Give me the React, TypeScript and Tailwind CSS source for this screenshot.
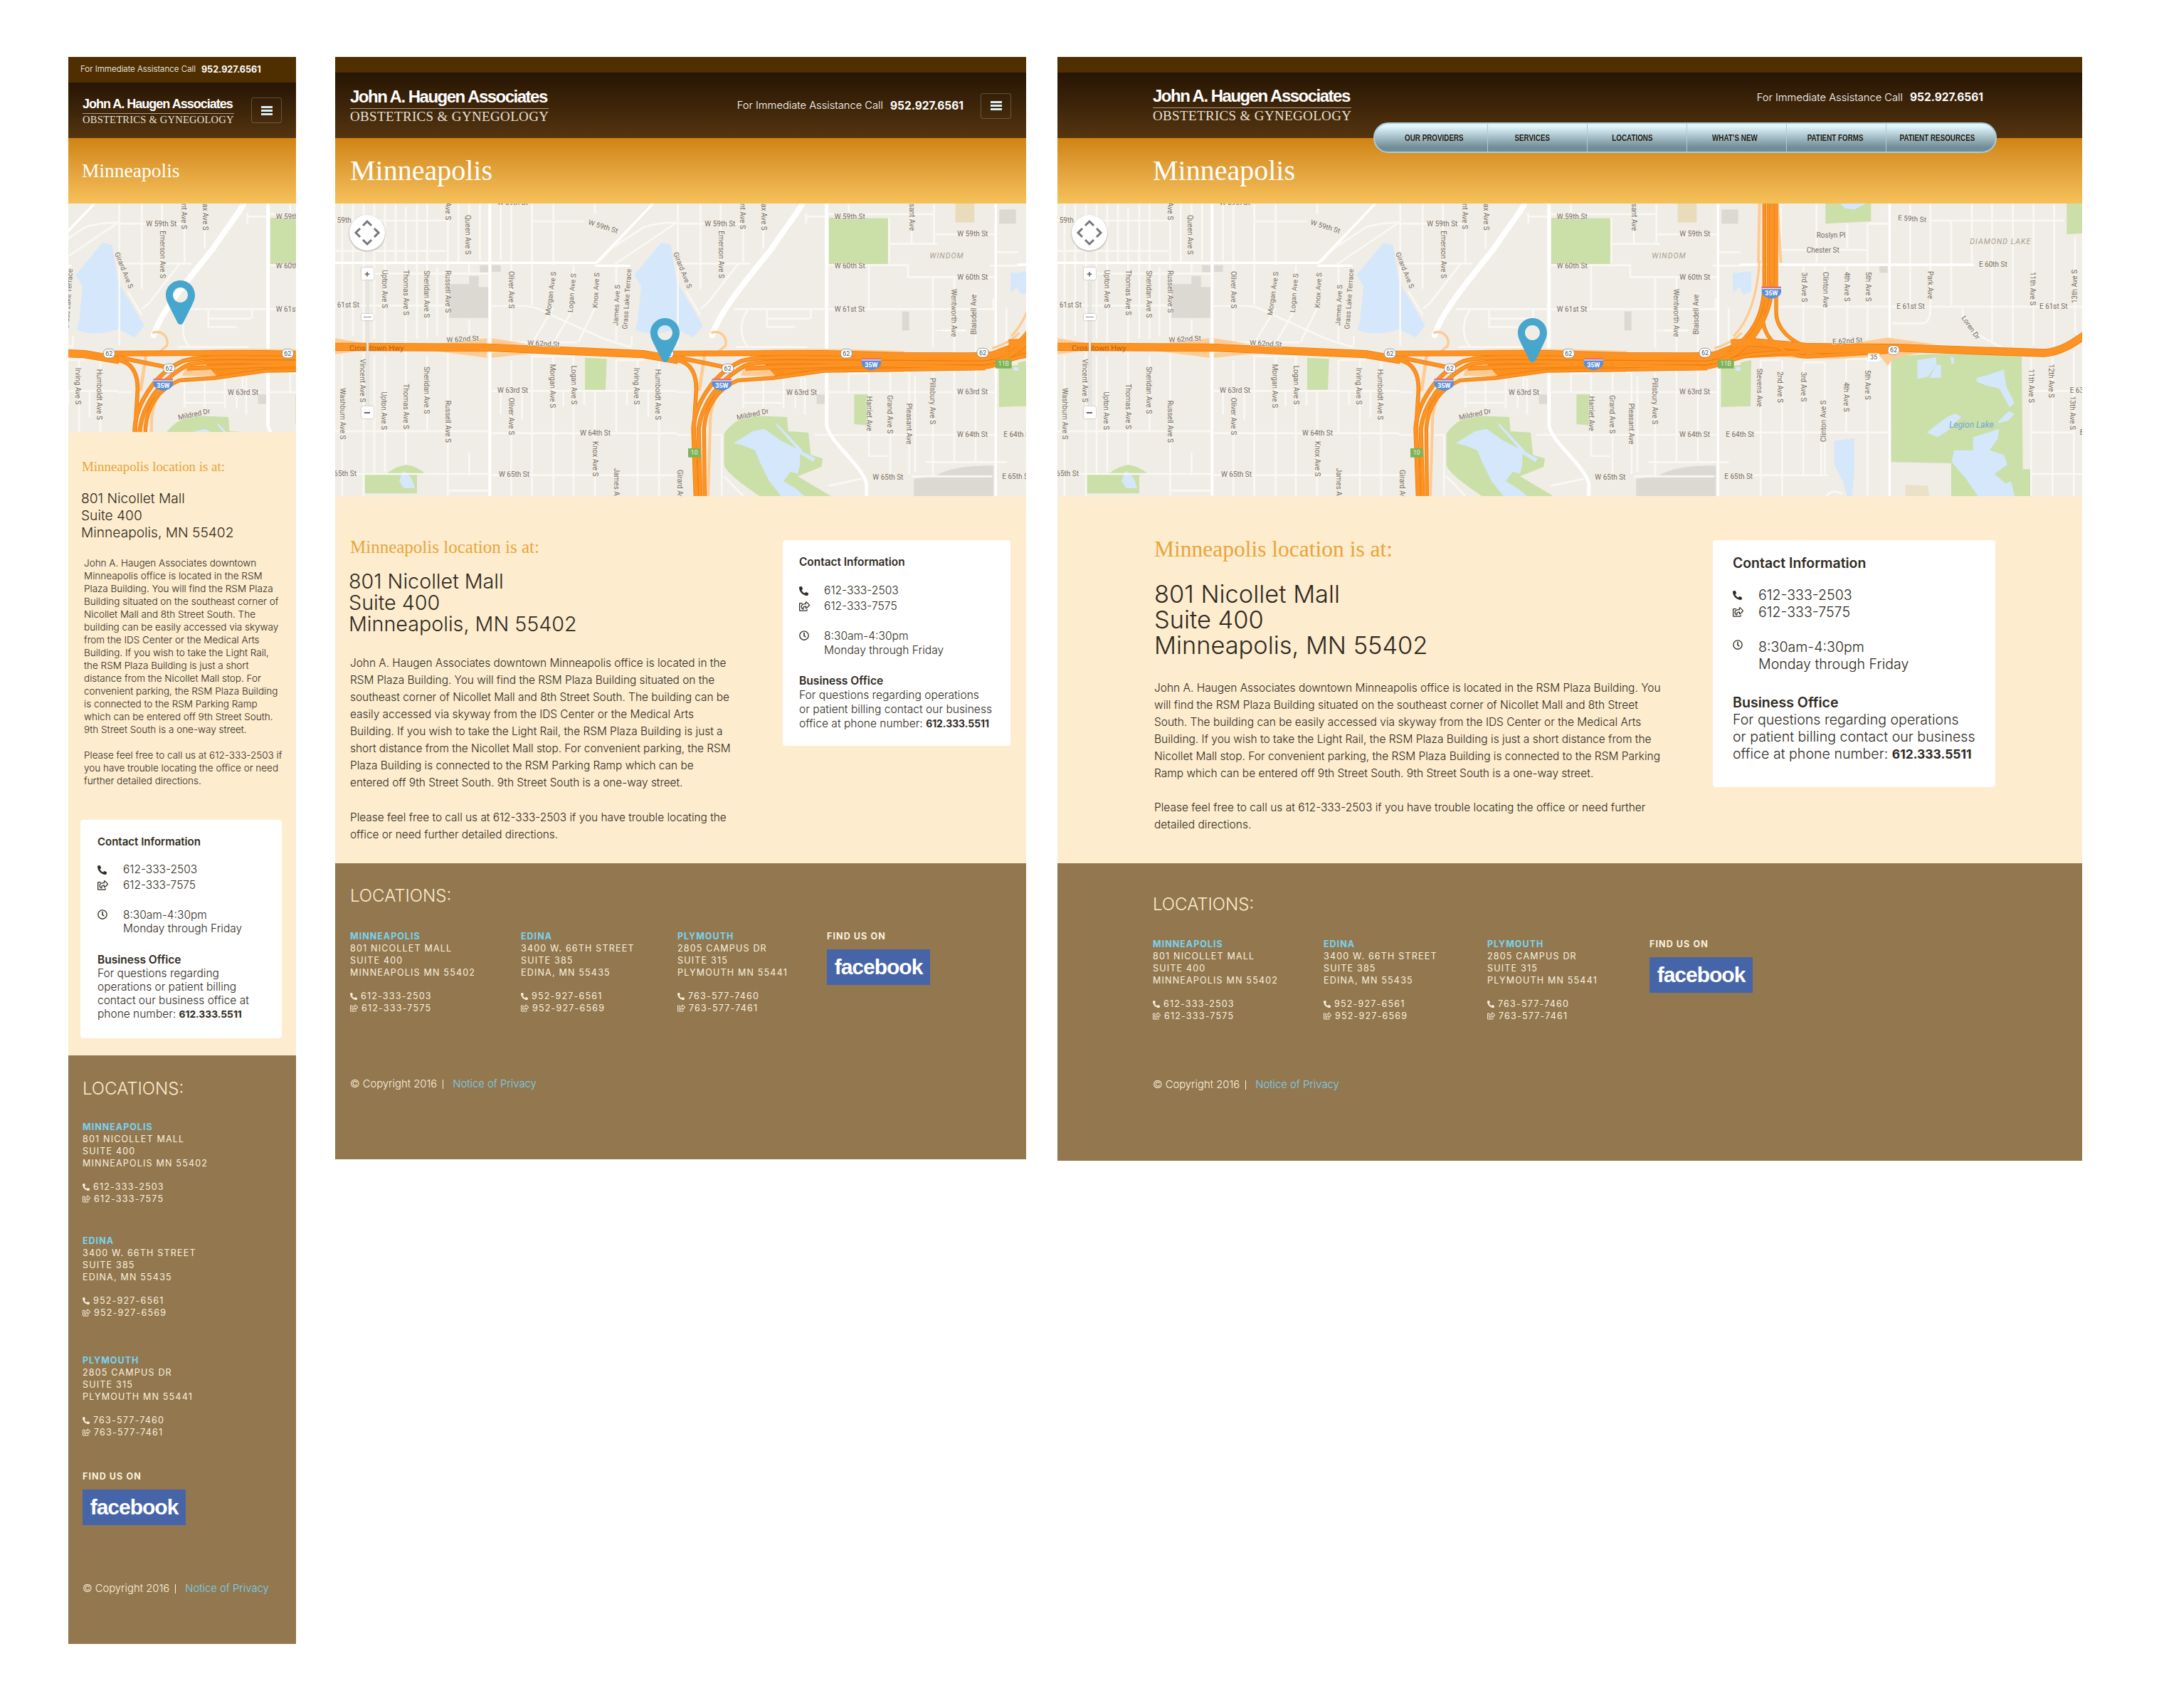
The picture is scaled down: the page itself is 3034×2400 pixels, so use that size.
import { FaPhoneAlt, FaRegClock, FaRegShareSquare } from "react-icons/fa";

// All map coordinates are in "panel" units: 3x the page pixels, one panel per 480px of map
const STREETS: string[][] = [
  [
    "M0 72H470M830 75H1050M0 200H470M165 295H650M0 430H480M660 432H800Q850 435 900 465L1100 555Q1150 580 1250 605",
    "M0 960H650M660 968H1440M660 790H1440M0 1140H650M660 1145H1440M660 585H1020M830 645H1010M1185 660H1300M30 0V570M30 640V1233",
    "M75 0V560M120 0V1233M165 0V570M210 0V600M210 640V1130M255 0V250M298 15V1100M345 0V570M388 0V570M388 640V960M430 270V560M475 0V1233",
    "M520 0V250M565 0V80M565 300V250M565 490V560M610 0V240M698 0V240M698 790V890M742 0V580M742 660V1233M830 0V430M830 640V1233M920 0V260M920 640V1233",
    "M1005 260V420M1005 640V1233M1095 0V45M1095 790V1233M1185 262V580M1185 660V960M1275 660V1233M1365 660V1233M920 440L835 580M1005 440L925 580M1095 440L1025 585",
    "M1320 790V900M1230 790V850M1050 790V850M962 790V855M788 790V910M1250 560V600M480 1210H650M565 1050V1145M165 640V1140",
    "M1340 0L1110 250M1150 200L1300 100Q1360 80 1440 80M1180 255L1440 80M1240 262H1100",
  ],
  [
    "M0 85H275M0 253H310M545 55H640M640 45H1080M1090 130H1340M900 170H1100M1350 205H1440M640 260H975V310H1340M1320 262H1440M240 445H1340",
    "M380 485H560M380 450V520H500M250 605H550M1120 535H1220M720 715H810M900 710H975M0 795H60M280 795H600M640 795H1340M280 840H445M0 975H60M140 975H190M580 975H1340",
    "M810 1065H890M1050 1090H1390M990 1150H1330M5 0V600M100 0V360M185 0V250M280 100V250M365 90V190M545 40V85M725 0V50M990 0V170M1085 0V165M895 60V250M810 260V450M1080 315V610",
    "M1170 310V1090M1260 375V1090M1335 400V450M1390 440V600M725 715V800M810 715V1065M900 710V1140M980 710V1140M1080 710V1145M1005 730V1130M365 750V860M280 750V860M450 720V865M540 735V890M500 800V865M190 975V1230",
    "M40 370L100 470M260 253L130 420L100 445M300 450C270 480 260 560 300 605M525 735V800M565 445V485M640 1190L780 1160M200 1150L280 1233",
  ],
  [
    "M800 72H1365M535 85H630V80M165 435H1440M170 195H530M640 505H770Q800 500 800 440M170 0V250M320 0V250M265 260V580M355 260V585M450 85V190M450 260V570M535 85V250M535 260V570",
    "M715 0V430M800 0V470M888 70V430M975 0V250M1060 0V590M1148 0V600M1235 0V600M1322 0V600M1410 140V530Q1410 560 1440 555M85 660H165M175 660V1233M85 660V1233M265 670V1150M265 670H355V1140M445 655H620M445 655V965M535 650V1233",
    "M1225 650V1233M1315 650V1233M1405 620V1233M1230 790H1440M0 965H625M1230 965H1400M0 1145H370M1225 1140H1440M340 1000V1140M935 440L940 490Q960 540 1100 605M360 1233Q390 1200 430 1225",
  ],
];

const WHITE_ROADS: { d: string; w: number }[][] = [
  [
    { d: "M652 0V1233", w: 12 },
    { d: "M0 250H1100M1100 262H1240", w: 10 },
    { d: "M1100 250L1340 0", w: 9 },
  ],
  [
    { d: "M150 555C180 450 330 280 400 190C460 100 510 40 530 0", w: 24 },
    { d: "M632 0V930C635 1000 780 1100 800 1180V1233", w: 15 },
    { d: "M1345 0V1233", w: 10 },
    { d: "M1090 535H1220", w: 3 },
  ],
  [
    { d: "M0 258H980", w: 10 },
    { d: "M628 0V1233", w: 10 },
  ],
];

const WATER: string[][] = [
  [
    "M1262 300L1290 350L1275 500L1265 530Q1330 565 1440 530L1510 565L1550 515L1500 430L1470 380L1440 330L1415 175L1375 165Z",
    "M285 1128Q305 1130 325 1165L336 1200L290 1200L270 1170Z",
  ],
  [
    "M240 1010L320 960L370 950L440 1000L520 1040L585 1075L575 1090L520 1055L520 1100L510 1140L480 1130L450 1170L500 1200L540 1233L440 1233L390 1170L350 1090L330 1040L280 1020Z",
    "M420 925L530 1040L520 1050L420 935Z",
    "M1408 292H1440V350L1408 375Z",
    "M1420 690H1440V705H1420Z",
  ],
  [
    "M420 0H530L480 25L440 20Z",
    "M0 290L45 285V370L15 385L0 365Z",
    "M395 1000L480 990V1130L470 1233H450L430 1170L395 1100Z",
    "M745 660L825 648V680L790 730L745 740Z",
    "M795 735L825 680H845V735Z",
    "M885 645L900 650V675H888Z",
    "M995 735L1050 720L1110 700L1120 770L1155 840L1135 860L1090 780L1030 765L995 750Z",
    "M1085 920L1130 875L1155 885L1130 915L1090 925Z",
    "M785 965L830 930L870 900L905 885L930 900L870 960L830 985Z",
    "M980 985L1090 950L1085 990L1050 1040L1110 1060L1125 1100L1070 1140L1130 1190L1150 1233H1000L950 1160L890 1090L900 1040L980 1040Z",
    "M1000 1233L1140 1170L1155 1233Z",
  ],
];

const PARKS: string[][] = [
  [
    "M1053 650L1145 655L1140 785H1053Z",
    "M125 1140H215Q260 1105 300 1102Q340 1105 385 1142L345 1145V1222H125Z",
  ],
  [
    "M642 60L898 62L890 255H642Z",
    "M748 805H808V935L748 930Z",
    "M1358 690L1440 680V855L1358 858Z",
    "M200 970C240 910 300 895 330 895L465 900L470 960L555 965L565 1060L615 1075L610 1110L510 1150L650 1233H350C300 1200 200 1130 200 1100Z",
  ],
  [
    "M358 0H550V75L358 85Z",
    "M1375 0H1440V125L1375 130Z",
    "M0 670L45 660L42 855H0Z",
    "M635 650Q800 620 1185 645L1190 1120H1225V1233H888V1095L635 1090Z",
  ],
];

const GRAY_BLOCKS: string[][] = [
  ["M480 340H565V305H605V352H645V482H480Z", "M610 260H645V290H610Z", "M660 260H698V288H660Z"],
  ["M1360 25H1430V85H1360Z", "M950 455H980V535H950Z", "M590 805H625V845H590Z", "M1000 1160L1090 1150C1150 1110 1250 1105 1335 1105V1233H1000Z"],
  ["M585 262H620V292H585Z"],
];

const LIGHT_RAMPS: { d: string; w?: number }[][] = [
  [
    { d: "M0 568L130 590H0Z", w: 0 },
    { d: "M0 635L130 618L0 618Z", w: 0 },
    { d: "M430 592L640 568V592Z", w: 0 },
    { d: "M660 568L810 592H660Z", w: 0 },
    { d: "M660 650L850 630H660Z", w: 0 },
    { d: "M410 620L640 650V620Z", w: 0 },
  ],
  [
    { d: "M320 620Q500 605 960 622L960 710H620Q500 735 270 725Z", w: 0 },
    { d: "M120 620L95 790", w: 14 },
    { d: "M145 545C190 530 215 570 205 600L175 625", w: 10 },
    { d: "M132 1233L142 900C150 840 170 800 190 780", w: 12 },
    { d: "M1330 610Q1400 590 1445 545", w: 10 },
  ],
  [
    { d: "M80 0L75 250M155 0L170 250", w: 12 },
    { d: "M80 240C70 400 30 500 -30 560", w: 10 },
    { d: "M440 595L620 565L830 595H440Z", w: 0 },
    { d: "M150 640C200 660 450 660 620 640V625H150Z", w: 0 },
    { d: "M585 640L620 685L640 655L760 628H600Z", w: 0 },
  ],
];

// Solid orange under the lanes where carriageways run side by side
const HIGHWAY_BASE: string[][] = [
  [],
  ["M500 625L1290 630L1300 702L620 708L420 732L360 665Z"],
  ["M-40 600L280 600V640L-40 655Z"],
];

// Orange carriageways, drawn as a dark casing and a lighter fill on top
const HIGHWAYS: { d: string; w: number }[][] = [
  [
    { d: "M0 604L650 607L1300 635L1445 660", w: 30 },
  ],
  [
    { d: "M-15 632L620 630L960 640H1240L1330 635Q1400 610 1445 590", w: 20 },
    { d: "M0 648L215 692", w: 14 },
    { d: "M0 660C55 670 85 710 82 790L72 950L85 1233", w: 13 },
    { d: "M80 1233L70 950C75 850 150 720 270 665C320 648 400 648 620 650L1290 655C1360 650 1400 625 1445 600", w: 14 },
    { d: "M100 1233L92 950C105 850 170 750 285 685C330 665 420 665 620 668L1290 672C1360 668 1400 640 1445 612", w: 14 },
    { d: "M290 695C400 690 500 685 800 680L1290 690C1360 685 1400 655 1445 628", w: 14 },
    { d: "M118 1233L115 950C120 860 170 780 260 745L410 735L620 705L1300 695", w: 12 },
  ],
  [
    { d: "M100 0V330C100 480 40 560 -40 618", w: 12 },
    { d: "M118 0V330C118 470 50 580 -40 632", w: 12 },
    { d: "M135 0V330C130 470 60 590 -40 645", w: 12 },
    { d: "M150 0V460C150 530 220 590 290 605", w: 12 },
    { d: "M-40 590L60 585L280 605L650 608L1280 630C1350 625 1400 590 1450 555", w: 30 },
    { d: "M-40 660C40 630 100 625 640 620", w: 14 },
    { d: "M95 500C105 570 170 640 280 645L620 625", w: 12 },
  ],
];

type Label = [number, number, number, string];

const LABELS: Label[][] = [
  [
    [8, 80, 0, "59th"], [8, 437, 0, "61st St"], [1065, 88, 17, "W 59th St"], [470, 585, -3, "W 62nd St"], [810, 597, 3, "W 62nd St"],
    [684, 797, 0, "W 63rd St"], [1032, 978, 0, "W 64th St"], [690, 1152, 0, "W 65th St"], [-5, 1148, 0, "65th St"], [683, 5, 0, "W 59th St"],
    [465, -5, 90, "Ave S"], [550, 48, 90, "Queen Ave S"], [197, 280, 90, "Upton Ave S"], [287, 280, 90, "Thomas Ave S"], [375, 282, 90, "Sheridan Ave S"],
    [465, 282, 90, "Russell Ave S"], [733, 285, 90, "Oliver Ave S"], [906, 472, -82, "Morgan Ave S"], [1001, 460, -85, "Logan Ave S"], [1106, 440, -87, "Knox Ave S"],
    [1192, 515, -87, "James Ave S"], [1231, 530, -86, "Grass Lake Terrace"], [106, 655, 90, "Vincent Ave S"], [20, 778, 90, "Washburn Ave S"], [196, 793, 90, "Upton Ave S"],
    [287, 760, 90, "Thomas Ave S"], [375, 687, 90, "Sheridan Ave S"], [465, 830, 90, "Russell Ave S"], [733, 818, 90, "Oliver Ave S"], [905, 677, 90, "Morgan Ave S"],
    [995, 683, 90, "Logan Ave S"], [1261, 692, 90, "Irving Ave S"], [1350, 698, 90, "Humboldt Ave S"], [1087, 1002, 90, "Knox Ave S"], [1175, 1115, 90, "James A"],
    [1425, 210, 68, "Girard Ave S"],
  ],
  [
    [118, 95, 0, "W 59th St"], [268, 0, 90, "nt Ave S"], [357, 0, 90, "ax Ave S"], [178, 115, 90, "Emerson Ave S"], [665, 65, 0, "W 59th St"], [980, 0, 90, "sant Ave"],
    [1183, 138, 0, "W 59th St"], [665, 272, 0, "W 60th St"], [1183, 322, 0, "W 60th St"], [665, 457, 0, "W 61st St"], [1158, 360, 90, "Wentworth Ave"], [1262, 552, -90, "Blaisdell Ave"],
    [462, 808, 0, "W 63rd St"], [1182, 805, 0, "W 63rd St"], [800, 812, 90, "Harriet Ave"], [888, 808, 90, "Grand Ave S"], [968, 842, 90, "Pleasant Ave"], [1068, 735, 90, "Pillsbury Ave S"],
    [1182, 983, 0, "W 64th St"], [1378, 983, 0, "E 64th St"], [826, 1163, 0, "W 65th St"], [1372, 1160, 0, "E 65th St"], [255, 912, -12, "Mildred Dr"], [2, 1122, 90, "Girard Ave S"],
  ],
  [
    [663, 70, 4, "E 59th St"], [320, 145, 0, "Roslyn Pl"], [278, 207, 0, "Chester St"], [1005, 266, 0, "E 60th St"], [257, 290, 90, "3rd Ave S"], [347, 288, 90, "Clinton Ave"],
    [438, 288, 90, "4th Ave S"], [527, 288, 90, "5th Ave S"], [790, 285, 90, "Park Ave"], [658, 443, 0, "E 61st St"], [1222, 288, 90, "11th Ave S"], [1260, 443, 0, "E 61st St"],
    [1420, 420, -90, "13th Ave S"], [930, 482, 55, "Loren Dr"], [388, 592, -3, "E 62nd St"], [70, 695, 90, "Stevens Ave"], [155, 708, 90, "2nd Ave S"], [254, 710, 90, "3rd Ave S"],
    [360, 1005, -90, "Clinton Ave S"], [435, 753, 90, "4th Ave S"], [525, 702, 90, "5th Ave S"], [1215, 698, 90, "11th Ave S"],
    [1300, 677, 90, "12th Ave S"], [1388, 798, 0, "E 63rd St"], [1390, 812, 90, "13th Ave S"], [1430, 975, 0, "E 64th"],
  ],
];

function RoadLabel({ x, y, rot, text }: { x: number; y: number; rot: number; text: string }) {
  return (
    <text
      x={x}
      y={y}
      transform={rot ? `rotate(${rot} ${x} ${y})` : undefined}
      fontSize={30}
      fill="#786d5f"
      stroke="#f3f1ea"
      strokeWidth={4}
      className="[font-family:Roboto,sans-serif] [paint-order:stroke]"
    >
      {text}
    </text>
  );
}

function RouteShield({ x, y }: { x: number; y: number }) {
  return (
    <g>
      <rect x={x - 24} y={y - 19} width={48} height={38} rx={17} fill="#fff" stroke="#8b8b85" strokeWidth={2.5} />
      <text x={x} y={y + 10} textAnchor="middle" fontSize={27} fill="#555" className="[font-family:Roboto,sans-serif]">62</text>
    </g>
  );
}

function InterstateShield({ x, y }: { x: number; y: number }) {
  return (
    <g>
      <path d={`M${x - 41} ${y - 24}H${x + 41}V${y - 2}Q${x + 38} ${y + 18} ${x} ${y + 26}Q${x - 38} ${y + 18} ${x - 41} ${y - 2}Z`} fill="#5c8fd6" />
      <path d={`M${x - 41} ${y - 26}H${x + 41}V${y - 17}H${x - 41}Z`} fill="#e0707a" />
      <path d={`M${x - 41} ${y - 17}H${x + 41}`} stroke="#fff" strokeWidth={3} />
      <text x={x} y={y + 12} textAnchor="middle" fontSize={27} fontWeight={700} fill="#fff" className="[font-family:Roboto,sans-serif]">35W</text>
    </g>
  );
}

function ExitTag({ x, y, w, h, text, fill, color }: { x: number; y: number; w: number; h: number; text: string; fill: string; color: string }) {
  return (
    <g>
      <rect x={x} y={y} width={w} height={h} fill={fill} />
      <text x={x + w / 2} y={y + h / 2 + 9} textAnchor="middle" fontSize={26} fill={color} className="[font-family:Roboto,sans-serif]">{text}</text>
    </g>
  );
}

function MapWorld() {
  return (
    <>
      <rect width={1440} height={411} fill="#f0ede6" />
      {[0, 1, 2].map((i) => (
        <g key={i} transform={`translate(${i * 480} 0) scale(0.33333)`}>
          {PARKS[i].map((d) => <path key={d} d={d} fill="#cbdfa9" />)}
          {WATER[i].map((d) => <path key={d} d={d} fill="#d5e7fb" />)}
          {GRAY_BLOCKS[i].map((d) => <path key={d} d={d} fill="#dcd9d3" />)}
          {i === 1 && <path d="M1175 0H1255V80H1175Z" fill="#e9dcbb" />}
          {i === 2 && <path d="M695 1185L790 1190L795 1233H695Z" fill="#ebe0c8" />}
          {STREETS[i].map((d) => <path key={d} d={d} fill="none" stroke="#f9f8f4" strokeWidth={8} />)}
          {WHITE_ROADS[i].map((r) => <path key={r.d} d={r.d} fill="none" stroke="#fff" strokeWidth={r.w} strokeLinecap="round" />)}
        </g>
      ))}
      {[0, 1, 2].map((i) => (
        <g key={i} transform={`translate(${i * 480} 0) scale(0.33333)`}>
          {LIGHT_RAMPS[i].map((r) => (
            <path key={r.d} d={r.d} fill={r.w ? "none" : "#fdcb93"} stroke={r.w ? "#fdcb93" : "none"} strokeWidth={r.w} />
          ))}
          {HIGHWAY_BASE[i].map((d) => <path key={d} d={d} fill="#fb8f1f" />)}
          {HIGHWAYS[i].map((h) => <path key={h.d} d={h.d} fill="none" stroke="#ec7806" strokeWidth={h.w + 4} />)}
          {HIGHWAYS[i].map((h) => <path key={h.d} d={h.d} fill="none" stroke="#fc9322" strokeWidth={h.w} />)}
        </g>
      ))}
      {[0, 1, 2].map((i) => (
        <g key={i} transform={`translate(${i * 480} 0) scale(0.33333)`}>
          {LABELS[i].map(([x, y, rot, text]) => <RoadLabel key={`${text}${x}${y}`} x={x} y={y} rot={rot} text={text} />)}
        </g>
      ))}
      <g transform="scale(0.33333)">
        <text x={60} y={622} fontSize={33} fill="#b8600f" className="[font-family:Roboto,sans-serif]">Crosstown Hwy</text>
        <RouteShield x={1402} y={632} />
      </g>
      <g transform="translate(480 0) scale(0.33333)">
        <text x={1066} y={230} fontSize={32} fontStyle="italic" letterSpacing={3} fill="#a89e8e" className="[font-family:Roboto,sans-serif]">WINDOM</text>
        <RouteShield x={715} y={632} />
        <RouteShield x={215} y={695} />
        <RouteShield x={1290} y={629} />
        <InterstateShield x={820} y={677} />
        <InterstateShield x={190} y={764} />
        <ExitTag x={48} y={1032} w={52} h={38} text="10" fill="#7cb35b" color="#e8f5dc" />
        <ExitTag x={1344} y={658} w={68} h={37} text="11B" fill="#7cb35b" color="#e8f5dc" />
      </g>
      <g transform="translate(960 0) scale(0.33333)">
        <text x={967} y={172} fontSize={32} fontStyle="italic" letterSpacing={3} fill="#a89e8e" className="[font-family:Roboto,sans-serif]">DIAMOND LAKE</text>
        <text x={880} y={945} fontSize={36} fontStyle="italic" fill="#74a5d6" className="[font-family:Roboto,sans-serif]">Legion Lake</text>
        <InterstateShield x={130} y={376} />
        <RouteShield x={645} y={618} />
        <ExitTag x={537} y={632} w={48} h={33} text="35" fill="#fff" color="#555" />
      </g>
    </>
  );
}

function MapPin({ className }: { className: string }) {
  return (
    <svg width="41" height="62" viewBox="0 0 41 62" className={`absolute ${className}`}>
      <path
        fillRule="evenodd"
        fill="#46a6cd"
        d="M20.5 0C9.2 0 0 9.2 0 20.5C0 27 2.5 31 5.5 37.5L16.5 59.5C18.2 62.8 22.8 62.8 24.5 59.5L35.5 37.5C38.5 31 41 27 41 20.5C41 9.2 31.8 0 20.5 0ZM20.5 10C26.3 10 31 14.7 31 20.5C31 26.3 26.3 31 20.5 31C14.7 31 10 26.3 10 20.5C10 14.7 14.7 10 20.5 10Z"
      />
    </svg>
  );
}

function MapControls() {
  return (
    <div className="absolute left-[20px] top-[15px] flex w-[50px] flex-col items-center">
      <svg width="52" height="52" viewBox="0 0 52 52" className="drop-shadow-[0_1px_1px_rgba(0,0,0,0.35)]">
        <circle cx="26" cy="26" r="25" fill="#fff" />
        <path d="M20 16L26 10L32 16M20 36L26 42L32 36M16 20L10 26L16 32M36 20L42 26L36 32" fill="none" stroke="#777" strokeWidth="3" />
      </svg>
      <div className="mt-[23px] flex w-[17px] flex-col items-center">
        <div className="flex h-[17px] w-[17px] items-center justify-center rounded-[2px] bg-white text-[13px] font-bold leading-none text-[#666] shadow-[0_0_2px_rgba(0,0,0,0.4)]">+</div>
        <div className="relative h-[178px] w-[3px] bg-[#e8e6e0] shadow-[0_0_1px_rgba(0,0,0,0.5)]">
          <div className="absolute left-[-7px] top-[48px] flex h-[9px] w-[17px] items-center justify-center rounded-[1px] bg-white shadow-[0_0_2px_rgba(0,0,0,0.4)]">
            <div className="h-[1px] w-[11px] bg-[#888]" />
          </div>
        </div>
        <div className="flex h-[17px] w-[17px] items-center justify-center rounded-[2px] bg-white shadow-[0_0_2px_rgba(0,0,0,0.4)]">
          <div className="h-[2px] w-[8px] bg-[#666]" />
        </div>
      </div>
    </div>
  );
}

function LocationMap({ x, w, h, pin, controls }: { x: number; w: number; h: number; pin: string; controls?: boolean }) {
  return (
    <div className="relative overflow-hidden" style={{ width: w, height: h }}>
      <svg width={w} height={h} viewBox={`${x} 0 ${w} ${h}`} className="block">
        <MapWorld />
      </svg>
      <MapPin className={pin} />
      {controls && <MapControls />}
    </div>
  );
}

function Logo({ title, sub }: { title: string; sub: string }) {
  return (
    <div className="inline-flex flex-col">
      <div className={`whitespace-nowrap border-b border-[#a99c8a] pb-[1px] font-bold text-white [font-family:'Liberation_Sans',sans-serif] ${title}`}>
        John A. Haugen Associates
      </div>
      <div className={`whitespace-nowrap text-[#e8e1d6] [font-family:'Liberation_Serif',serif] ${sub}`}>
        OBSTETRICS &amp; GYNEGOLOGY
      </div>
    </div>
  );
}

function MenuToggle() {
  return (
    <div className="flex h-[36px] w-[43px] flex-col items-center justify-center gap-[2px] rounded-[3px] border border-[#ffffff38]">
      <div className="h-[3px] w-[16px] bg-[#d6eef5]" />
      <div className="h-[3px] w-[16px] bg-[#d6eef5]" />
      <div className="h-[3px] w-[16px] bg-[#d6eef5]" />
    </div>
  );
}

function Lines({ lines, className }: { lines: string[]; className: string }) {
  return (
    <div className={className}>
      {lines.map((line) => <div key={line} className="whitespace-nowrap">{line}</div>)}
    </div>
  );
}

function ContactCard({ width, text, titleText, pad, indent, gaps, billing }: {
  width: string; text: string; titleText: string; pad: string; indent: string;
  gaps: [string, string, string]; billing: string[];
}) {
  return (
    <div className={`rounded-[4px] bg-white font-light text-[#2f2a22] ${width} ${pad} ${text}`}>
      <div className={`font-semibold whitespace-nowrap ${titleText}`}>Contact Information</div>
      <div className={gaps[0]}>
        <div className="flex items-center">
          <div className={indent}><FaPhoneAlt className="h-[13px] w-[13px] text-[#2f2a22]" /></div>
          <span>612-333-2503</span>
        </div>
        <div className="flex items-center">
          <div className={indent}><FaRegShareSquare className="h-[14px] w-[15px] text-[#2f2a22]" /></div>
          <span>612-333-7575</span>
        </div>
      </div>
      <div className={`flex items-start ${gaps[1]}`}>
        <div className={`${indent} pt-[2px]`}><FaRegClock className="h-[14px] w-[14px] text-[#2f2a22]" /></div>
        <div>
          <div>8:30am-4:30pm</div>
          <div>Monday through Friday</div>
        </div>
      </div>
      <div className={gaps[2]}>
        <div className="font-semibold">Business Office</div>
        {billing.slice(0, -1).map((line) => <div key={line} className="whitespace-nowrap">{line}</div>)}
        <div className="whitespace-nowrap">
          {billing[billing.length - 1]} <b className="text-[0.89em] font-bold">612.333.5511</b>
        </div>
      </div>
    </div>
  );
}

const OFFICES = [
  { name: "MINNEAPOLIS", lines: ["801 NICOLLET MALL", "SUITE 400", "MINNEAPOLIS MN 55402"], phone: "612-333-2503", fax: "612-333-7575" },
  { name: "EDINA", lines: ["3400 W. 66TH STREET", "SUITE 385", "EDINA, MN 55435"], phone: "952-927-6561", fax: "952-927-6569" },
  { name: "PLYMOUTH", lines: ["2805 CAMPUS DR", "SUITE 315", "PLYMOUTH MN 55441"], phone: "763-577-7460", fax: "763-577-7461" },
];

function Office({ office, className }: { office: (typeof OFFICES)[number]; className: string }) {
  return (
    <div className={`text-[12.5px] font-normal leading-[17px] tracking-[1.2px] text-[#fbf1de] ${className}`}>
      <div className="font-bold tracking-[1px] text-[#79d4f2]">{office.name}</div>
      {office.lines.map((line) => <div key={line} className="whitespace-nowrap">{line}</div>)}
      <div className="mt-[16px] flex items-center gap-[5px]"><FaPhoneAlt className="h-[10px] w-[10px]" />{office.phone}</div>
      <div className="flex items-center gap-[5px]"><FaRegShareSquare className="h-[11px] w-[11px]" />{office.fax}</div>
    </div>
  );
}

function FindUs({ className }: { className: string }) {
  return (
    <div className={className}>
      <div className="text-[12.5px] font-bold leading-[17px] tracking-[1.1px] text-[#fbf1de]">FIND US ON</div>
      <div className="mt-[10px] flex h-[50px] w-[145px] items-center justify-center bg-[#4665a8] pb-[1px] text-[30px] font-bold tracking-[-1px] text-white [font-family:'Liberation_Sans',sans-serif]">
        facebook
      </div>
    </div>
  );
}

function Copyright({ className }: { className: string }) {
  return (
    <div className={`flex items-center whitespace-nowrap text-[14.8px] font-light leading-[20px] text-[#fbf1de] ${className}`}>
      <span>© Copyright 2016</span>
      <span className="ml-[8px] mr-[13px] h-[13px] w-[1px] bg-[#fbf1de]" />
      <span className="text-[#79d4f2]">Notice of Privacy</span>
    </div>
  );
}

const COPY_HEAD = "Minneapolis location is at:";
const ADDRESS = ["801 Nicollet Mall", "Suite 400", "Minneapolis, MN 55402"];

function MobileView() {
  return (
    <div className="w-[320px] flex-none">
      <div className="flex h-[36px] items-center bg-[#4f2e00] pl-[17px] text-[11.6px] font-light text-white">
        <span>For Immediate Assistance Call</span>
        <span className="ml-[8px] text-[12.6px] font-bold">952.927.6561</span>
      </div>
      <div className="flex h-[78px] items-center justify-between bg-linear-to-b from-[#271504] to-[#553510] pl-[20px] pr-[20px]">
        <Logo title="text-[18px] leading-[24px] tracking-[-1px]" sub="text-[14.5px] leading-[16px] tracking-[0.25px]" />
        <MenuToggle />
      </div>
      <div className="flex h-[92px] items-center bg-linear-to-b from-[#d08410] to-[#f6c15a] pl-[19px] text-[27.5px] text-white [font-family:'Liberation_Serif',serif]">
        Minneapolis
      </div>
      <LocationMap x={410} w={320} h={321} pin="left-[136.5px] top-[108px]" />
      <div className="bg-[#fdecce] pb-[24px] pt-[37px] text-[#2e2820]">
        <div className="pl-[19px] text-[18.9px] leading-[24px] text-[#e8a53a] [font-family:'Liberation_Serif',serif]">{COPY_HEAD}</div>
        <Lines lines={ADDRESS} className="mt-[20px] pl-[18px] text-[19.2px] font-light leading-[24px]" />
        <Lines
          className="mt-[22px] pl-[22px] text-[13.5px] font-light leading-[18px]"
          lines={[
            "John A. Haugen Associates downtown", "Minneapolis office is located in the RSM", "Plaza Building. You will find the RSM Plaza",
            "Building situated on the southeast corner of", "Nicollet Mall and 8th Street South. The", "building can be easily accessed via skyway",
            "from the IDS Center or the Medical Arts", "Building. If you wish to take the Light Rail,", "the RSM Plaza Building is just a short",
            "distance from the Nicollet Mall stop. For", "convenient parking, the RSM Plaza Building", "is connected to the RSM Parking Ramp",
            "which can be entered off 9th Street South.", "9th Street South is a one-way street.",
          ]}
        />
        <Lines
          className="mt-[18px] pl-[22px] text-[13.5px] font-light leading-[18px]"
          lines={["Please feel free to call us at 612-333-2503 if", "you have trouble locating the office or need", "further detailed directions."]}
        />
        <div className="ml-[17px] mt-[46px]">
          <ContactCard
            width="w-[283px]" pad="pl-[24px] pt-[21px] pb-[24px]" text="text-[15.5px] leading-[19px]" titleText="text-[15px] leading-[20px]"
            indent="w-[36px] flex-none" gaps={["mt-[18px] leading-[22px]", "mt-[21px]", "mt-[25px]"]}
            billing={["For questions regarding", "operations or patient billing", "contact our business office at", "phone number:"]}
          />
        </div>
      </div>
      <div className="h-[827px] bg-[#92774f] pl-[20px] pt-[32px]">
        <div className="text-[24px] font-light leading-[30px] text-[#fdecce]">LOCATIONS:</div>
        <Office office={OFFICES[0]} className="mt-[30px]" />
        <Office office={OFFICES[1]} className="mt-[42px]" />
        <Office office={OFFICES[2]} className="mt-[50px]" />
        <FindUs className="mt-[45px]" />
        <Copyright className="mt-[79px]" />
      </div>
    </div>
  );
}

function TabletView() {
  return (
    <div className="ml-[55px] w-[971px] flex-none">
      <div className="h-[22px] bg-[#4f2e00]" />
      <div className="flex h-[92px] items-center justify-between bg-linear-to-b from-[#271504] to-[#553510] pl-[21px] pr-[21px]">
        <Logo title="text-[24px] leading-[30px] tracking-[-1.5px]" sub="text-[19px] leading-[22px] tracking-[0.35px]" />
        <div className="flex items-center pt-[1px] text-white">
          <span className="text-[14.7px] font-light">For Immediate Assistance Call</span>
          <span className="ml-[10px] text-[15.5px] font-bold">952.927.6561</span>
          <div className="ml-[24px]"><MenuToggle /></div>
        </div>
      </div>
      <div className="flex h-[92px] items-center bg-linear-to-b from-[#d08410] to-[#f6c15a] pl-[21px] text-[40px] text-white [font-family:'Liberation_Serif',serif]">
        Minneapolis
      </div>
      <LocationMap x={0} w={971} h={411} pin="left-[442.5px] top-[161px]" controls />
      <div className="flex h-[516px] justify-between bg-[#fdecce] pl-[21px] pr-[22px] text-[#2e2820]">
        <div className="pt-[57px]">
          <div className="text-[25px] leading-[30px] text-[#e8a53a] [font-family:'Liberation_Serif',serif]">{COPY_HEAD}</div>
          <Lines lines={ADDRESS} className="mt-[18px] -ml-[2px] text-[28.7px] font-light leading-[30px]" />
          <Lines
            className="mt-[28px] text-[15.4px] font-light leading-[24px]"
            lines={[
              "John A. Haugen Associates downtown Minneapolis office is located in the", "RSM Plaza Building. You will find the RSM Plaza Building situated on the",
              "southeast corner of Nicollet Mall and 8th Street South. The building can be", "easily accessed via skyway from the IDS Center or the Medical Arts",
              "Building. If you wish to take the Light Rail, the RSM Plaza Building is just a", "short distance from the Nicollet Mall stop. For convenient parking, the RSM",
              "Plaza Building is connected to the RSM Parking Ramp which can be", "entered off 9th Street South. 9th Street South is a one-way street.",
            ]}
          />
          <Lines
            className="mt-[25px] text-[15.4px] font-light leading-[24px]"
            lines={["Please feel free to call us at 612-333-2503 if you have trouble locating the", "office or need further detailed directions."]}
          />
        </div>
        <div className="pt-[62px]">
          <ContactCard
            width="w-[320px]" pad="pl-[23px] pt-[21px] pb-[21px]" text="text-[15.6px] leading-[20px]" titleText="text-[15.4px] leading-[20px]"
            indent="w-[35px] flex-none" gaps={["mt-[19px] leading-[22px]", "mt-[21px]", "mt-[23px]"]}
            billing={["For questions regarding operations", "or patient billing contact our business", "office at phone number:"]}
          />
        </div>
      </div>
      <div className="h-[416px] bg-[#92774f] pl-[21px] pt-[31px]">
        <div className="text-[24px] font-light leading-[30px] text-[#fdecce]">LOCATIONS:</div>
        <div className="mt-[33px] flex">
          <Office office={OFFICES[0]} className="w-[240px]" />
          <Office office={OFFICES[1]} className="w-[220px]" />
          <Office office={OFFICES[2]} className="w-[210px]" />
          <FindUs className="" />
        </div>
        <Copyright className="mt-[88px]" />
      </div>
    </div>
  );
}

const NAV_ITEMS: { label: string; cell: string }[] = [
  { label: "OUR PROVIDERS", cell: "w-[158px] pl-[8px]" },
  { label: "SERVICES", cell: "w-[140px] pr-[14px]" },
  { label: "LOCATIONS", cell: "w-[140px] pr-[14px]" },
  { label: "WHAT’S NEW", cell: "w-[140px] pr-[6px]" },
  { label: "PATIENT FORMS", cell: "w-[140px] pr-[2px]" },
  { label: "PATIENT RESOURCES", cell: "w-[158px] pr-[14px]" },
];

function DesktopNav() {
  return (
    <div className="absolute left-[444px] top-[92px] flex h-[43px] w-[876px] overflow-hidden rounded-[21px] border-2 border-[#a9ccd8] bg-linear-to-b from-[#e0f5fc] from-[10%] to-[#718d97] to-[85%]">
      {NAV_ITEMS.map((item, i) => (
        <div
          key={item.label}
          className={`flex flex-none items-center justify-center text-[12px] font-bold text-[#221a10] [font-family:'Liberation_Sans',sans-serif] ${item.cell} ${i > 0 ? "border-l border-[#a9ccd8]" : ""}`}
        >
          <span className="inline-block scale-x-[0.82] whitespace-nowrap">{item.label}</span>
        </div>
      ))}
    </div>
  );
}

function DesktopView() {
  return (
    <div className="relative ml-[44px] w-[1440px] flex-none">
      <div className="h-[22px] bg-[#4f2e00]" />
      <div className="flex h-[92px] justify-between bg-linear-to-b from-[#271504] to-[#553510] pl-[134px] pr-[139px]">
        <div className="pt-[18px]">
          <Logo title="text-[24px] leading-[30px] tracking-[-1.5px]" sub="text-[19px] leading-[22px] tracking-[0.35px]" />
        </div>
        <div className="flex items-center self-start pt-[23px] text-white">
          <span className="text-[14.7px] font-light">For Immediate Assistance Call</span>
          <span className="ml-[10px] text-[15.5px] font-bold">952.927.6561</span>
        </div>
      </div>
      <div className="flex h-[92px] items-center bg-linear-to-b from-[#d08410] to-[#f6c15a] pl-[134px] text-[40px] text-white [font-family:'Liberation_Serif',serif]">
        Minneapolis
      </div>
      <DesktopNav />
      <LocationMap x={0} w={1440} h={411} pin="left-[647px] top-[161px]" controls />
      <div className="flex h-[516px] bg-[#fdecce] pl-[136px] text-[#2e2820]">
        <div className="w-[785px] pt-[57px]">
          <div className="text-[31.5px] leading-[36px] text-[#e8a53a] [font-family:'Liberation_Serif',serif]">{COPY_HEAD}</div>
          <Lines lines={ADDRESS} className="mt-[27px] text-[34.4px] font-light leading-[36px]" />
          <Lines
            className="mt-[30px] text-[15.5px] font-light leading-[24px]"
            lines={[
              "John A. Haugen Associates downtown Minneapolis office is located in the RSM Plaza Building. You", "will find the RSM Plaza Building situated on the southeast corner of Nicollet Mall and 8th Street",
              "South. The building can be easily accessed via skyway from the IDS Center or the Medical Arts", "Building. If you wish to take the Light Rail, the RSM Plaza Building is just a short distance from the",
              "Nicollet Mall stop. For convenient parking, the RSM Plaza Building is connected to the RSM Parking", "Ramp which can be entered off 9th Street South. 9th Street South is a one-way street.",
            ]}
          />
          <Lines
            className="mt-[24px] text-[15.5px] font-light leading-[24px]"
            lines={["Please feel free to call us at 612-333-2503 if you have trouble locating the office or need further", "detailed directions."]}
          />
        </div>
        <div className="pt-[62px]">
          <ContactCard
            width="w-[397px]" pad="pl-[28px] pt-[20px] pb-[34px]" text="text-[19.6px] leading-[24px]" titleText="text-[19.4px] leading-[24px]"
            indent="w-[36px] flex-none" gaps={["mt-[21px]", "mt-[25px]", "mt-[30px]"]}
            billing={["For questions regarding operations", "or patient billing contact our business", "office at phone number:"]}
          />
        </div>
      </div>
      <div className="h-[418px] bg-[#92774f] pl-[134px] pt-[43px]">
        <div className="text-[24px] font-light leading-[30px] text-[#fdecce]">LOCATIONS:</div>
        <div className="mt-[32px] flex">
          <Office office={OFFICES[0]} className="w-[240px]" />
          <Office office={OFFICES[1]} className="w-[230px]" />
          <Office office={OFFICES[2]} className="w-[228px]" />
          <FindUs className="" />
        </div>
        <Copyright className="mt-[78px]" />
      </div>
    </div>
  );
}

export default function App() {
  return (
    <div className="flex min-h-[2400px] w-[3034px] items-start bg-white pl-[96px] pt-[80px] [font-family:Inter,sans-serif]">
      <MobileView />
      <TabletView />
      <DesktopView />
    </div>
  );
}
